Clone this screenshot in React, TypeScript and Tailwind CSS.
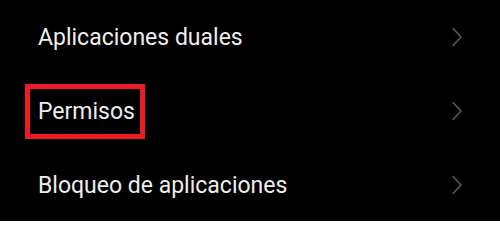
import React from "react";

const Chevron = () => (
  <svg width="12" height="20" viewBox="0 0 12 20" fill="none" className="shrink-0">
    <path d="M2 1.5 L10 10 L2 18.5" stroke="#5a5a5a" strokeWidth="1.6" strokeLinecap="round" strokeLinejoin="round" />
  </svg>
);

const rows = ["Aplicaciones duales", "Permisos", "Bloqueo de aplicaciones"];

export default function App() {
  return (
    <div className="w-[500px] h-[221px] bg-black overflow-hidden" style={{ fontFamily: "Roboto, 'Noto Sans', sans-serif" }}>
      <div className="flex flex-col">
        {rows.map((r, i) => (
          <div key={r} className="h-[74px] flex items-center pl-[38px] pr-[37px] justify-between">
            {i === 1 ? (
              <div className="-ml-[13px] border-[5px] border-[#ed1c24] w-[120px] h-[55px] flex items-center pl-[8px]">
                <span className="text-[23px] text-[#ededed] leading-none">{r}</span>
              </div>
            ) : (
              <span className="text-[23px] text-[#ededed] leading-none">{r}</span>
            )}
            <Chevron />
          </div>
        ))}
      </div>
    </div>
  );
}
